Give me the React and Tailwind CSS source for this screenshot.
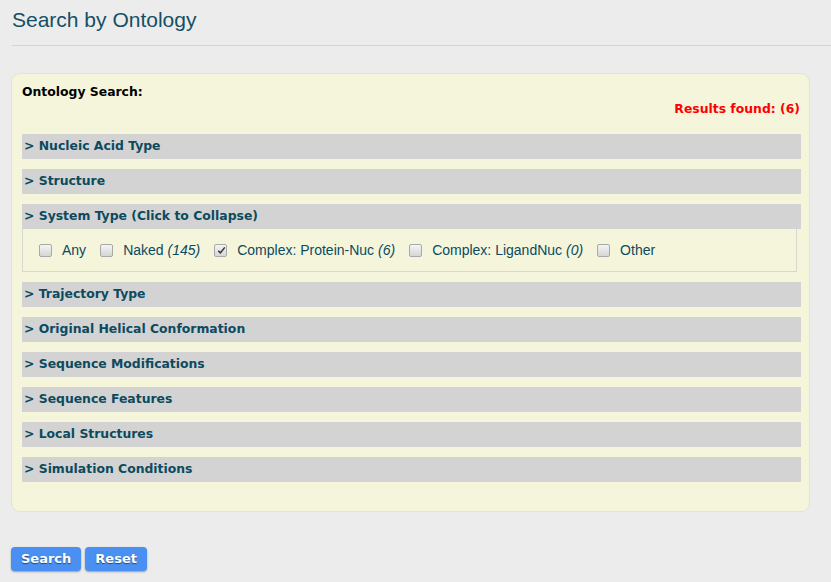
const sections = [
  { title: 'Nucleic Acid Type' },
  { title: 'Structure' },
  { title: 'System Type (Click to Collapse)', open: true },
  { title: 'Trajectory Type' },
  { title: 'Original Helical Conformation' },
  { title: 'Sequence Modifications' },
  { title: 'Sequence Features' },
  { title: 'Local Structures' },
  { title: 'Simulation Conditions' },
]

const systemOptions = [
  { label: 'Any' },
  { label: 'Naked', count: '(145)' },
  { label: 'Complex: Protein-Nuc', count: '(6)', checked: true },
  { label: 'Complex: LigandNuc', count: '(0)' },
  { label: 'Other' },
]

function Checkbox({ checked }) {
  return (
    <span className="relative inline-block h-[13px] w-[13px] shrink-0 rounded-[2px] border border-[#a9a9a9] bg-gradient-to-b from-[#f4f4f4] to-[#d6d6d6]">
      {checked && (
        <svg viewBox="0 0 12 12" className="absolute left-[1px] top-[0px] h-[11px] w-[11px]">
          <path d="M2.5 6.2 L4.8 8.6 L9.6 2.6" fill="none" stroke="#333" strokeWidth="1.7" />
        </svg>
      )}
    </span>
  )
}

function SectionHeader({ title }) {
  return (
    <div className="flex h-[25px] items-center bg-[#d3d3d3] pl-[2px] font-['DejaVu_Sans',sans-serif] text-[12.4px] font-bold text-[#0c4a5e]">
      &gt; {title}
    </div>
  )
}

function App() {
  return (
    <div className="min-h-[582px] bg-[#ececec] pl-[11px] pt-[7px] font-['Liberation_Sans',Arial,sans-serif]">
      <h1 className="pl-[1px] text-[21px] leading-[25px] text-[#154f65]">Search by Ontology</h1>
      <div className="mt-[13px] ml-[1px] border-t border-[#d4d4d4]" />

      <div className="mt-[27px] w-[799px] rounded-[9px] border border-[#e4e4d0] bg-[#f5f5dc] pb-[29px] pl-[10px] pr-[8px] pt-[10px]">
        <div className="font-['DejaVu_Sans',sans-serif] text-[12.4px] font-bold leading-[16px] text-black">
          Ontology Search:
        </div>
        <div className="pr-[1px] text-right font-['DejaVu_Sans',sans-serif] text-[12.4px] font-bold leading-[18px] text-[#ff0000]">
          Results found: (6)
        </div>

        <div className="mt-[16px] flex flex-col gap-[10px]">
          {sections.map((section) => (
            <div key={section.title}>
              <SectionHeader title={section.title} />
              {section.open && (
                <div className="mr-[4px] flex h-[43px] items-center border border-t-0 border-[#d8d8d0] pl-[16px] text-[14px] text-[#0c4a5e]">
                  {systemOptions.map((option) => (
                    <div key={option.label} className="mr-[14px] flex items-center gap-[10px]">
                      <Checkbox checked={option.checked} />
                      <span>
                        {option.label}
                        {option.count && <i> {option.count}</i>}
                      </span>
                    </div>
                  ))}
                </div>
              )}
            </div>
          ))}
        </div>
      </div>

      <div className="mt-[35px] flex gap-[4px]">
        <button className="h-[24px] rounded-[4px] bg-[#4a90f2] px-[10px] font-['DejaVu_Sans',sans-serif] text-[13px] font-bold text-white shadow-[0_1px_2px_rgba(0,0,0,0.35)] [text-shadow:0_1px_1px_rgba(0,0,0,0.5)]">
          Search
        </button>
        <button className="h-[24px] rounded-[4px] bg-[#4a90f2] px-[10px] font-['DejaVu_Sans',sans-serif] text-[13px] font-bold text-white shadow-[0_1px_2px_rgba(0,0,0,0.35)] [text-shadow:0_1px_1px_rgba(0,0,0,0.5)]">
          Reset
        </button>
      </div>
    </div>
  )
}

export default App
